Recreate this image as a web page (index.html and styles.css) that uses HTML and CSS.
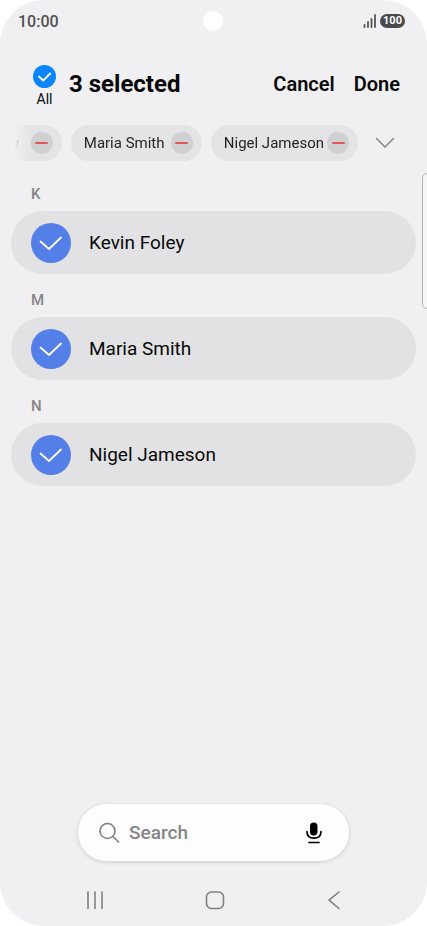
FILE: index.html
```html
<!DOCTYPE html>
<html lang="en">
<head>
<meta charset="utf-8">
<meta name="viewport" content="width=device-width, initial-scale=1">
<title>Select contacts</title>
<link rel="stylesheet" href="styles.css">
</head>
<body>
<div class="phone">
  <div class="status">
    <span class="clock">10:00</span>
    <span class="camera"></span>
    <span class="indicators">
      <svg class="signal" width="14" height="14" viewBox="0 0 14 14" aria-hidden="true"><path d="M1.500 11V13M5 8V13M8.500 5V13M12 1V13"/></svg>
      <span class="battery">100</span>
    </span>
  </div>

  <header class="toolbar">
    <label class="all">
      <span class="check check-small">
        <input type="checkbox" checked>
        <svg width="23" height="23" viewBox="0 0 23 23" aria-hidden="true"><path d="M6 11.500L10.200 15.500L17.200 8.500"/></svg>
      </span>
      <span>All</span>
    </label>
    <h1>3 selected</h1>
    <button class="action" type="button">Cancel</button>
    <button class="action" type="button">Done</button>
  </header>

  <div class="selection">
    <div class="chips">
      <span class="chip">Kevin Foley<button class="remove" type="button" aria-label="Remove Kevin Foley"></button></span>
      <span class="chip">Maria Smith<button class="remove" type="button" aria-label="Remove Maria Smith"></button></span>
      <span class="chip">Nigel Jameson<button class="remove" type="button" aria-label="Remove Nigel Jameson"></button></span>
    </div>
    <button class="expand" type="button" aria-label="Expand">
      <svg width="20" height="12" viewBox="0 0 20 12" aria-hidden="true"><path d="M1.500 1.500L10 10L18.500 1.500"/></svg>
    </button>
  </div>

  <main class="contacts">
    <h2>K</h2>
    <label class="contact">
      <span class="check">
        <input type="checkbox" checked>
        <svg width="40" height="40" viewBox="0 0 40 40" aria-hidden="true"><path d="M9.500 18.500L18 26L30 14.500"/></svg>
      </span>
      <span>Kevin Foley</span>
    </label>
    <h2>M</h2>
    <label class="contact">
      <span class="check">
        <input type="checkbox" checked>
        <svg width="40" height="40" viewBox="0 0 40 40" aria-hidden="true"><path d="M9.500 18.500L18 26L30 14.500"/></svg>
      </span>
      <span>Maria Smith</span>
    </label>
    <h2>N</h2>
    <label class="contact">
      <span class="check">
        <input type="checkbox" checked>
        <svg width="40" height="40" viewBox="0 0 40 40" aria-hidden="true"><path d="M9.500 18.500L18 26L30 14.500"/></svg>
      </span>
      <span>Nigel Jameson</span>
    </label>
  </main>

  <div class="search">
    <svg class="line" width="22" height="22" viewBox="0 0 22 22" aria-hidden="true"><circle cx="8.500" cy="9" r="7.500"/><path d="M14 14.500L19.500 20"/></svg>
    <input type="search" placeholder="Search" aria-label="Search">
    <button type="button" aria-label="Voice search">
      <svg width="16" height="22" viewBox="0 0 16 22" aria-hidden="true"><rect x="4" y="0.500" width="7.500" height="13" rx="3.700"/><path class="mic" d="M1 9.500C1 14 4 16.200 8 16.200S15 14 15 9.500M3 20.500H13"/></svg>
    </button>
  </div>

  <nav class="keys">
    <button type="button" aria-label="Recents"><svg class="line" width="20" height="20" viewBox="0 0 20 20" aria-hidden="true"><path d="M3 2V18.500M10 2V18.500M17 2V18.500"/></svg></button>
    <button type="button" aria-label="Home"><svg class="line" width="20" height="20" viewBox="0 0 20 20" aria-hidden="true"><rect x="1.500" y="2" width="17" height="16.500" rx="5"/></svg></button>
    <button type="button" aria-label="Back"><svg class="line" width="20" height="20" viewBox="0 0 20 20" aria-hidden="true"><path d="M15 2L5 10.200L15 18.500"/></svg></button>
  </nav>
  <div class="edge"></div>
</div>
</body>
</html>
```
FILE: styles.css
```css
* {
  box-sizing: border-box;
}

body {
  margin: 0;
  background: #fff;
  color: #080808;
  font-family: Roboto, "Noto Sans", sans-serif;
}

button {
  margin: 0;
  padding: 0;
  border: 0;
  background: none;
  color: inherit;
  font: inherit;
}

svg {
  display: block;
  fill: none;
  stroke-linecap: round;
  stroke-linejoin: round;
}

h1,
h2 {
  margin: 0;
}

.phone {
  position: relative;
  display: flex;
  flex-direction: column;
  min-height: 100vh;
  overflow: hidden;
  border-radius: 44px;
  background: #f0f0f2;
}

.status {
  display: grid;
  grid-template-columns: 1fr auto 1fr;
  align-items: center;
  height: 42px;
  padding: 0 20px 0 18px;
}

.clock {
  color: #505052;
  font-size: 16px;
  font-weight: 500;
}

.camera {
  width: 20px;
  height: 20px;
  border-radius: 50%;
  background: #fff;
}

.indicators {
  display: flex;
  justify-content: flex-end;
  align-items: center;
  gap: 3px;
  padding-right: 2px;
}

.signal {
  stroke: #555557;
  stroke-width: 1.8;
}

.battery {
  width: 25px;
  border-radius: 7px;
  background: #4a4a4c;
  color: #fff;
  font-size: 11px;
  font-weight: 700;
  line-height: 14px;
  text-align: center;
}

.toolbar {
  display: flex;
  align-items: center;
  height: 83px;
  padding: 0 27px 0 33px;
}

.all {
  display: flex;
  flex-direction: column;
  align-items: center;
  gap: 3px;
  margin-right: 13px;
  padding-top: 5px;
  font-size: 14px;
  line-height: 17px;
}

.check {
  display: grid;
  flex: none;
  width: 40px;
  height: 40px;
}

.check > * {
  grid-area: 1 / 1;
}

.check input {
  appearance: none;
  width: 100%;
  height: 100%;
  margin: 0;
  border-radius: 50%;
  background: #557fe8;
}

.check svg {
  z-index: 1;
  stroke: #fff;
  stroke-width: 1.8;
  pointer-events: none;
}

.check-small {
  width: 23px;
  height: 23px;
}

.check-small input {
  background: #0a84ff;
}

h1 {
  flex: 1;
  font-size: 24px;
  font-weight: 700;
}

.action {
  margin-left: 19px;
  font-size: 20px;
  font-weight: 600;
}

.selection {
  display: flex;
  align-items: center;
  padding: 0 32px 0 15px;
}

.chips {
  display: flex;
  flex: 1;
  justify-content: flex-end;
  gap: 9px;
  min-width: 0;
  overflow: hidden;
  mask-image: linear-gradient(to right, transparent, #000 16px);
}

.chip {
  display: flex;
  flex: none;
  align-items: center;
  justify-content: space-between;
  gap: 3px;
  min-width: 131px;
  height: 36px;
  padding: 0 9px 0 13px;
  border-radius: 18px;
  background: #e4e4e6;
  color: #252527;
  font-size: 15px;
}

.remove {
  display: grid;
  place-items: center;
  width: 22px;
  height: 22px;
  border-radius: 50%;
  background: #d0d0d2;
}

.remove::before {
  content: "";
  width: 13px;
  height: 2px;
  border-radius: 1px;
  background: #dd5a5a;
}

.expand {
  margin-left: 17px;
}

.expand svg {
  stroke: #858587;
  stroke-width: 1.5;
}

.contacts {
  flex: 1;
  padding: 7px 11px 0;
}

h2 {
  padding: 9px 0 0 20px;
  color: #858587;
  font-size: 15px;
  font-weight: 500;
  line-height: 34px;
}

.contact {
  display: flex;
  align-items: center;
  gap: 18px;
  height: 63px;
  padding: 0 20px;
  border-radius: 32px;
  background: #e2e2e4;
  font-size: 19px;
}

.search {
  display: flex;
  align-items: center;
  gap: 8px;
  height: 57px;
  margin: 0 78px;
  padding: 0 27px 0 21px;
  border-radius: 29px;
  background: #fdfdff;
  box-shadow: 0 1px 4px #00000026;
}

.line {
  flex: none;
  stroke: #808082;
  stroke-width: 1.6;
}

.search input {
  flex: 1;
  min-width: 0;
  padding: 0;
  border: 0;
  outline: 0;
  background: none;
  font: 500 19px Roboto, "Noto Sans", sans-serif;
}

.search input::placeholder {
  color: #858587;
  opacity: 1;
}

.search rect {
  fill: #000;
}

.mic {
  stroke: #000;
  stroke-width: 1.7;
}

.keys {
  display: flex;
  justify-content: space-between;
  padding: 29px 83px 16px 85px;
}

.edge {
  position: absolute;
  top: 173px;
  right: -6px;
  width: 11px;
  height: 136px;
  border: 1px solid #b4b4b6;
  border-radius: 5px;
  background: #f5f5f7;
}
```
